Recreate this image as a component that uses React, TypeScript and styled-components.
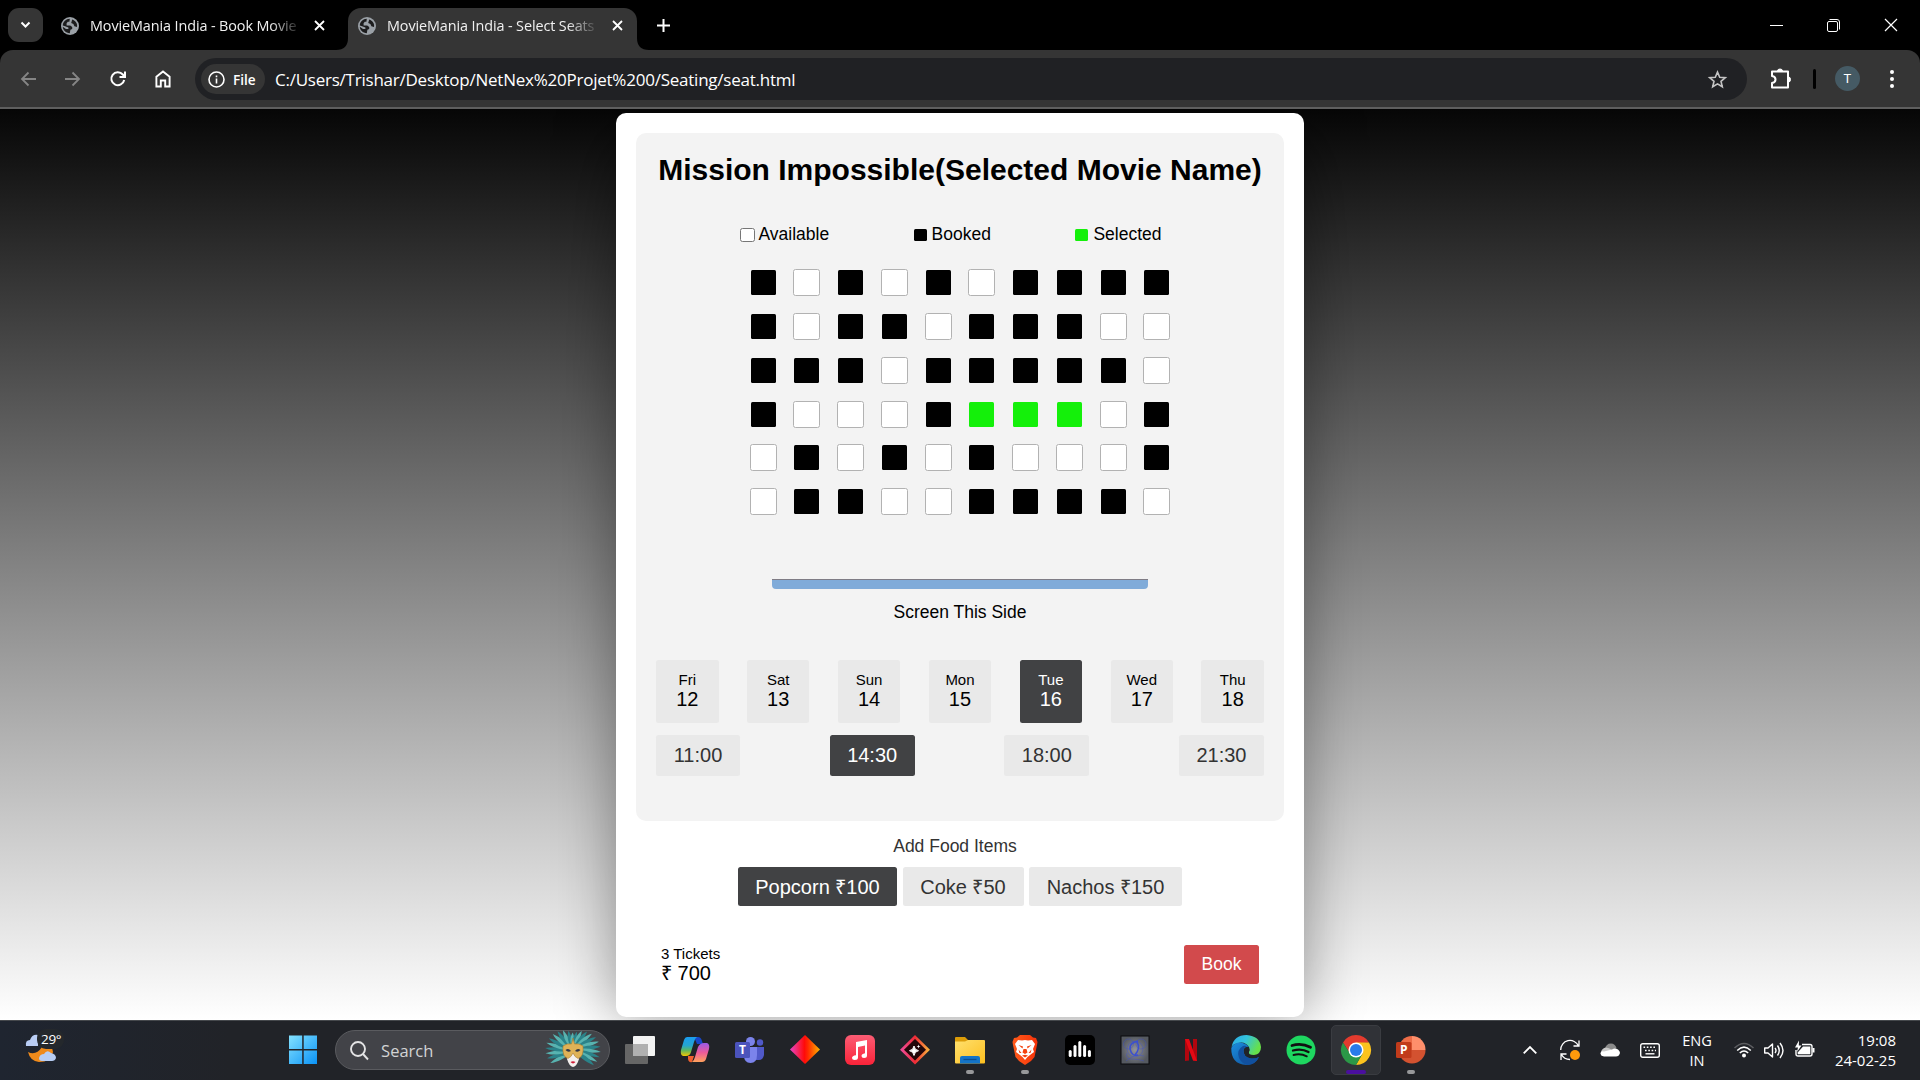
import React from "react";
import styled, { createGlobalStyle, css } from "styled-components";

const GlobalStyle = createGlobalStyle`
  * { box-sizing: border-box; }
  body { margin: 0; background: #000; overflow: hidden; }
  button { font: inherit; border: 0; padding: 0; margin: 0; }
  svg { display: block; flex: none; overflow: visible; }
`;

const uiFont = `"Open Sans", "Noto Sans", sans-serif`;
const pageFont = `"Liberation Sans", Arial, sans-serif`;

const Desktop = styled.div`
  width: 1920px;
  height: 1080px;
  display: flex;
  flex-direction: column;
  overflow: hidden;
`;

/* ---------- Browser chrome ---------- */

const TabStrip = styled.div`
  height: 50px;
  flex: none;
  display: flex;
  align-items: flex-end;
  background: #000;
  font-family: ${uiFont};
  color: #fff;
`;

const TabSearch = styled.div`
  width: 35px;
  height: 34px;
  margin: 0 0 8px 8px;
  border-radius: 11px;
  background: #353535;
  display: grid;
  place-items: center;
`;

const Tab = styled.div<{ $active?: boolean }>`
  width: ${(p) => (p.$active ? 289 : 293)}px;
  height: 42px;
  display: flex;
  align-items: center;
  padding: 0 12px 7px ${(p) => (p.$active ? 10 : 18)}px;
  border-radius: 13px 13px 0 0;
  background: ${(p) => (p.$active ? "#353535" : "transparent")};
`;

const TabTitle = styled.span<{ $gap: number }>`
  width: 211px;
  margin-left: 11px;
  margin-right: ${(p) => p.$gap}px;
  overflow: hidden;
  white-space: nowrap;
  font-size: 14.4px;
  letter-spacing: -0.1px;
  line-height: 20px;
  color: #f1f1f1;
  mask-image: linear-gradient(90deg, #000 180px, transparent 212px);
`;

const Flare = styled.svg`
  width: 12px;
  height: 12px;
`;

const NewTab = styled.div`
  width: 28px;
  height: 50px;
  display: grid;
  place-items: center;
`;

const WindowButtons = styled.div`
  margin-left: auto;
  padding-right: 1px;
  height: 50px;
  display: flex;
  align-items: center;
`;

const WindowButton = styled.div`
  width: 57px;
  height: 49px;
  display: grid;
  place-items: center;
`;

const Toolbar = styled.div`
  height: 57px;
  flex: none;
  display: flex;
  align-items: center;
  background: #353535;
  border-radius: 13px 13px 0 0;
  font-family: ${uiFont};
  padding-left: 6px;
`;

const ToolButton = styled.div<{ $w?: number }>`
  width: ${(p) => p.$w ?? 45}px;
  height: 57px;
  display: grid;
  place-items: center;
`;

const Omnibox = styled.div`
  width: 1552px;
  height: 42px;
  margin-top: 1px;
  margin-left: 10px;
  border-radius: 21px;
  background: #202124;
  display: flex;
  align-items: center;
  padding: 0 20px 0 6px;
`;

const FileChip = styled.div`
  width: 64px;
  height: 30px;
  border-radius: 15px;
  background: #353535;
  color: #fff;
  display: flex;
  align-items: center;
  gap: 8px;
  padding-left: 7px;
  font-size: 13.6px;
  font-weight: 600;
`;

const Url = styled.span`
  margin-left: 10px;
  flex: 1;
  font-size: 17px;
  letter-spacing: -0.235px;
  line-height: 24px;
  padding-top: 1px;
  color: #fff;
  white-space: nowrap;
`;

const Divider = styled.div`
  width: 3px;
  height: 20px;
  border-radius: 2px;
  background: #000;
`;

const Avatar = styled.div`
  width: 25px;
  height: 25px;
  border-radius: 50%;
  margin: 0 17px 0 19px;
  background: #455a64;
  color: #fff;
  font: 13px Roboto, sans-serif;
  display: grid;
  place-items: center;
`;

const ChromeEdge = styled.div`
  height: 2px;
  flex: none;
  background: #5f5f5f;
`;

/* ---------- Booking page ---------- */

const Page = styled.main`
  height: 911px;
  flex: none;
  overflow: hidden;
  display: flex;
  justify-content: center;
  align-items: flex-start;
  background: linear-gradient(#060606, #fff);
  font-family: ${pageFont};
  color: #000;
`;

const Card = styled.section`
  width: 688px;
  height: 904px;
  margin-top: 4px;
  padding: 20px;
  border-radius: 10px;
  background: #fff;
  box-shadow: 0 0 60px rgba(0, 0, 0, 0.4);
  display: flex;
  flex-direction: column;
`;

const Panel = styled.div`
  height: 688px;
  flex: none;
  padding: 20px;
  border-radius: 10px;
  background: #f3f3f3;
  display: flex;
  flex-direction: column;
  align-items: center;
`;

const Title = styled.h1`
  margin: 0;
  font-size: 30px;
  line-height: 33px;
  white-space: nowrap;
`;

const Legend = styled.div`
  width: 422px;
  height: 20px;
  margin: 38px 19px 25.4px 0;
  display: flex;
  justify-content: space-between;
`;

const LegendItem = styled.div<{ $gap: number }>`
  display: flex;
  align-items: center;
  gap: ${(p) => p.$gap}px;
  font-size: 17.5px;
  line-height: 20px;
`;

type SeatState = "free" | "booked" | "picked";

const seatFill = {
  free: css`
    background: #fff;
    border: 1px solid #b2b2b2;
  `,
  booked: css`
    background: #000;
    border: 1px solid transparent;
    background-clip: padding-box;
  `,
  picked: css`
    background: #14f00a;
    border: 1px solid transparent;
    background-clip: padding-box;
  `,
};

const LegendBox = styled.span<{ $state: SeatState }>`
  width: 15px;
  height: 14px;
  margin-top: 2px;
  border-radius: 2.5px;
  ${(p) => seatFill[p.$state]}
  ${(p) => p.$state === "free" && "border-color: #767676;"}
`;

const Seats = styled.div`
  display: grid;
  grid-template-columns: repeat(10, 27px);
  grid-auto-rows: 27px;
  gap: 16.75px;
`;

const Seat = styled.span<{ $state: SeatState }>`
  border-radius: 2.5px;
  ${(p) => seatFill[p.$state]}
`;

const Screen = styled.div`
  width: 376px;
  height: 10px;
  margin-top: 63.85px;
  background: #80abd9;
  border-top: 1px solid #7f7c85;
  border-radius: 0 0 4px 4px;
`;

const ScreenLabel = styled.div`
  margin-top: 13px;
  font-size: 17.5px;
  line-height: 20px;
`;

const Row = styled.div<{ $top: number }>`
  width: 608px;
  margin-top: ${(p) => p.$top}px;
  display: flex;
  justify-content: space-between;
`;

const choice = css<{ $on?: boolean }>`
  border-radius: 2.5px;
  background: ${(p) => (p.$on ? "#414244" : "#e9e9e9")};
`;

const Day = styled.button<{ $on?: boolean }>`
  ${choice}
  width: 62.5px;
  height: 63px;
  display: flex;
  flex-direction: column;
  align-items: center;
  padding-top: 11px;
  color: ${(p) => (p.$on ? "#fff" : "#000")};
`;

const DayName = styled.span`
  font-size: 15px;
  line-height: 18px;
`;

const DayNumber = styled.span`
  font-size: 20px;
  line-height: 20px;
`;

const Pill = styled.button<{ $on?: boolean; $w: number; $h: number }>`
  ${choice}
  width: ${(p) => p.$w}px;
  height: ${(p) => p.$h}px;
  font-size: 20px;
  white-space: nowrap;
  color: ${(p) => (p.$on ? "#fff" : "#333")};
`;

const FoodTitle = styled.div`
  margin-top: 15px;
  padding-right: 10px;
  text-align: center;
  font-size: 17.5px;
  line-height: 20px;
  color: #333;
`;

const FoodRow = styled.div`
  margin-top: 11px;
  display: flex;
  justify-content: center;
  gap: 5.5px;
`;

const Checkout = styled.div`
  margin-top: 39px;
  padding: 0 25px;
  display: flex;
  justify-content: space-between;
`;

const Tickets = styled.div`
  font-size: 15px;
  line-height: 18px;
`;

const Price = styled.div`
  font-size: 20px;
  line-height: 20px;
`;

const Book = styled.button`
  width: 75px;
  height: 39px;
  border-radius: 2.5px;
  background: #d24a4c;
  color: #fff;
  font-size: 17.5px;
`;

/* ---------- Taskbar ---------- */

const Taskbar = styled.footer`
  height: 60px;
  flex: none;
  display: flex;
  align-items: center;
  padding-bottom: 1px;
  background: linear-gradient(90deg, #1f2530, #212328 12%, #212328);
  border-top: 1px solid #45484c;
  font-family: ${uiFont};
  color: #fff;
`;

const Weather = styled.div`
  width: 275px;
  height: 58px;
  padding: 13px 0 0 25px;
  display: flex;
`;

const Temperature = styled.span`
  align-self: flex-start;
  margin: -4px 0 0 -15px;
  font-size: 13.5px;
  line-height: 18px;
  letter-spacing: -0.3px;
`;

const Slot = styled.div<{ $active?: boolean }>`
  width: ${(p) => (p.$active ? 50 : 55.1)}px;
  margin: ${(p) => (p.$active ? "0 2.55px" : "0")};
  height: 50px;
  display: flex;
  flex-direction: column;
  align-items: center;
  padding-top: 10px;
  border-radius: 5px;
  background: ${(p) => (p.$active ? "#303237" : "transparent")};
  border: ${(p) => (p.$active ? "1px solid #3a3c41" : "0")};
  ${(p) => p.$active && "padding-top: 9px;"}
`;

const Indicator = styled.span<{ $active?: boolean }>`
  width: ${(p) => (p.$active ? 20 : 8)}px;
  height: 4px;
  margin-top: 5px;
  border-radius: 2px;
  background: ${(p) => (p.$active ? "#4a0f9f" : "#97989a")};
`;

const SearchBox = styled.div`
  width: 275px;
  height: 40px;
  margin: 0 2px 0 5px;
  border-radius: 20px;
  border: 1px solid #5a5b5f;
  background: #424348;
  display: flex;
  align-items: center;
  padding: 0 7px 0 14px;
  font-size: 16.5px;
  color: #d2d3d4;
`;

const SearchText = styled.span`
  margin-left: 12px;
  flex: 1;
`;

const Tray = styled.div`
  margin-left: auto;
  display: flex;
  align-items: center;
  height: 58px;
  padding-right: 24px;
  font-size: 14.6px;
  line-height: 20px;
`;

const TrayIcon = styled.div<{ $w: number }>`
  width: ${(p) => p.$w}px;
  display: grid;
  place-items: center;
`;

const Language = styled.div`
  width: 54px;
  padding-left: 2px;
  text-align: center;
`;

const Clock = styled.div`
  width: 71px;
  text-align: right;
  white-space: nowrap;
  font-size: 15px;
`;

/* ---------- Icons ---------- */

const Globe = () => (
  <svg width="18" height="18" viewBox="0 0 18 18">
    <circle cx="9" cy="9" r="9" fill="#9aa0a6" />
    <path d="M1.800 8.600C2 4.600 5 1.900 8.800 1.800L8.400 4.800H6.800L5.600 6.200V8.600H9.200L11.200 10V12L9.400 12.800 8.800 16.200C4.800 16 1.800 13 1.800 9.800L5 12H7.400V10.600L4.800 9.600ZM11.200 2.400 10.200 6 12.400 7 13.400 9.200 16 10C16.800 6.600 14.600 3.600 11.200 2.400Z" fill="#1c1c1d" />
  </svg>
);

const Cross = ({ size = 9, w = 1.8 }: { size?: number; w?: number }) => (
  <svg width={size} height={size} viewBox={`0 0 ${size} ${size}`} stroke="#fff" strokeWidth={w}>
    <path d={`M0 0L${size} ${size}M${size} 0L0 ${size}`} />
  </svg>
);

const Arrow = ({ flip }: { flip?: boolean }) => (
  <svg width="15" height="14" viewBox="0 0 15 14" fill="none" stroke="#858585" strokeWidth="1.8">
    <path d={flip ? "M0 7H14M7.5 .5 14 7 7.5 13.5" : "M15 7H1M7.5 .5 1 7 7.5 13.5"} />
  </svg>
);

const bars = (xs: number[][]) =>
  xs.map(([x, y, h]) => <rect key={x} x={x} y={y} width="3" height={h} rx="1.5" fill="#fff" />);

const feather = (a: number, len: number, c: string) => (
  <path key={a} transform={`translate(29 19) rotate(${a}) scale(1 ${len})`} d="M0 0C-3-9-2.500-18 1-24 3-16 2-7 0 0Z" fill={c} />
);

const Mask = () => (
  <svg width="58" height="38" viewBox="0 0 58 38">
    {[-122, -110, -99, -88, -77, -66, -54, -42, -29, -16, -4, 9, 22, 35, 47, 59, 70, 81, 92, 103, 114, 124].map((a, i) =>
      feather(a, 0.7 + 0.46 * Math.abs(Math.sin((a * Math.PI) / 180)), i % 2 ? "#2a8289" : "#58b3b0"),
    )}
    <path d="M22 19H36L35 28Q33 35 29 36 25 35 23 28Z" fill="#f4f0ee" />
    <path d="M19 15Q23 12 27.500 13L29 7 30.500 13Q35 12 39 15 40 26 34 27.500 30.500 26 29 22 27.500 26 24 27.500 18 26 19 15Z" fill="#dfb257" stroke="#a87a2e" strokeWidth=".6" />
    <path d="M21.500 19Q24.500 16.500 27 20 24 22 21.500 19ZM31 20Q33.500 16.500 36.500 19 34 22 31 20Z" fill="#333747" />
    <path d="M26.500 31Q29 29.500 31.500 31 29 33.800 26.500 31Z" fill="#d01c38" />
  </svg>
);

const CloudMoon = () => (
  <svg width="31" height="36" viewBox="0 0 31 36">
    <path d="M1 12Q0 6 5 6 7 0 13 1V12Z" fill="#b9cdf5" />
    <path d="M3 18Q11 22 17 13 27 9 28 18 26 28 14 28 5 27 3 18Z" fill="#ef8a1b" />
    <path d="M14 24Q15 20 19 20 22 15 26 19 31 20 31 24 30 27 27 27H17Q14 27 14 24Z" fill="#b7cdf4" />
    <rect x="12" y="-5" width="27" height="20" rx="9" fill="#24282c" />
  </svg>
);

const WindowsLogo = () => (
  <svg width="30" height="30" viewBox="0 0 30 30">
    <linearGradient id="win" x1="0" y1="0" x2="1" y2="1" gradientUnits="objectBoundingBox">
      <stop stopColor="#84e2ff" />
      <stop offset="1" stopColor="#0a92f5" />
    </linearGradient>
    <path d="M1 .500H14.200V14H1ZM15.700.500H29V14H15.700ZM1 15.500H14.200V29H1ZM15.700 15.500H29V29H15.700Z" fill="url(#win)" />
  </svg>
);

const TaskView = () => (
  <svg width="30" height="30" viewBox="0 0 30 30">
    <rect x="8" y="1" width="22" height="20" rx="1" fill="#f3f3f3" />
    <rect x="0" y="9" width="23" height="20" rx="1" fill="#666" />
    <rect x="8" y="9" width="15" height="12" fill="#b0b0b0" />
  </svg>
);

const Copilot = () => (
  <svg width="30" height="30" viewBox="0 0 30 30">
    <linearGradient id="cpa" x1="0" y1="0" x2="0" y2="1">
      <stop stopColor="#1a9cf0" />
      <stop offset=".45" stopColor="#25a5cf" />
      <stop offset=".7" stopColor="#5cb860" />
      <stop offset="1" stopColor="#f3c800" />
    </linearGradient>
    <linearGradient id="cpb" x1="0" y1="0" x2="0" y2="1">
      <stop stopColor="#9a5be8" />
      <stop offset=".5" stopColor="#ec5a9a" />
      <stop offset="1" stopColor="#ffa25c" />
    </linearGradient>
    <path d="M14 2H18Q21 2 22 6L23 9H17Z" fill="#1747c8" />
    <path d="M8 21H14L12 27Q9 28 8 24Z" fill="#f0602f" />
    <path d="M7 2H17Q15 3 14 7L11 17Q10 21 6 21H3Q0 20 1 15L4 5Q5 2 7 2Z" fill="url(#cpa)" />
    <path d="M24 8H27Q30 9 29 14L26 24Q25 27 22 27H12Q14 26 15 22L18 12Q20 8 24 8Z" fill="url(#cpb)" />
  </svg>
);

const LetterInIcon = styled.text`
  font: 700 12px ${uiFont};
  fill: #fff;
`;

const Teams = () => (
  <svg width="30" height="30" viewBox="0 0 30 30">
    <circle cx="15.500" cy="6.500" r="4.500" fill="#7b83eb" />
    <circle cx="25" cy="7.500" r="3.200" fill="#5059c9" />
    <path d="M20 12H29V20Q28 25 24 25H20Z" fill="#5059c9" />
    <path d="M9 12H22V20Q22 28 15.500 28 9 28 9 20Z" fill="#7b83eb" />
    <rect x="0" y="7" width="15" height="16" rx="1.500" fill="#4b53bc" />
    <LetterInIcon x="7.500" y="19.300" textAnchor="middle">T</LetterInIcon>
  </svg>
);

const RedDiamond = () => (
  <svg width="30" height="30" viewBox="0 0 30 30">
    <linearGradient id="dia">
      <stop stopColor="#e646c8" />
      <stop offset=".48" stopColor="#ff0a0a" />
      <stop offset=".6" stopColor="#ff2a00" />
      <stop offset="1" stopColor="#ffb400" />
    </linearGradient>
    <path d="M15 0 30 14.500 15 29 0 14.500Z" fill="url(#dia)" />
  </svg>
);

const AppleMusic = () => (
  <svg width="30" height="30" viewBox="0 0 30 30">
    <linearGradient id="mus" x1="0" y1="0" x2="0" y2="1">
      <stop stopColor="#fb5c74" />
      <stop offset="1" stopColor="#fa2339" />
    </linearGradient>
    <rect width="30" height="30" rx="6" fill="url(#mus)" />
    <path d="M11 7 22 5V20.500Q22 23 19 23 16.500 23 16.500 21 16.500 19 20 18.300V10.500L13 12V22.500Q13 25 9.700 25 7 25 7 23 7 20.800 11 20.300Z" fill="#fff" />
  </svg>
);

const SparkDiamond = () => (
  <svg width="30" height="30" viewBox="0 0 30 30">
    <linearGradient id="spk">
      <stop stopColor="#ee4a94" />
      <stop offset=".5" stopColor="#ee2a35" />
      <stop offset="1" stopColor="#f9a93c" />
    </linearGradient>
    <path d="M15 2 28 14.700 15 27.500 2 14.700Z" fill="#220609" stroke="url(#spk)" strokeWidth="2.800" />
    <path d="M14 11Q14.500 15 18.500 15.700 14.500 16.400 14 20.500 13.500 16.400 9.500 15.700 13.500 15 14 11Z" fill="#fff" stroke="#fff" />
    <path d="M18.500 9.500 19 11 20.500 11.500 19 12 18.500 13.500 18 12 16.500 11.500 18 11Z" fill="#fff" />
  </svg>
);

const Folder = () => (
  <svg width="30" height="30" viewBox="0 0 30 30">
    <linearGradient id="fol" x1="0" y1="0" x2="1" y2="1">
      <stop stopColor="#ffe06e" />
      <stop offset="1" stopColor="#fdbf1f" />
    </linearGradient>
    <path d="M0 3Q0 2 1 2H10L13 5V8H0Z" fill="#dc9c08" />
    <path d="M0 6.500H10L13 5H29Q30 5 30 6V27.500Q30 28.500 29 28.500H1Q0 28.500 0 27.500Z" fill="url(#fol)" />
    <path d="M5 28.500V23Q5 21 7 21H23Q25 21 25 23V28.500Z" fill="#1474c8" />
    <path d="M8.500 24.500H21.500" stroke="#0a4f93" strokeWidth="1.300" />
  </svg>
);

const Brave = () => (
  <svg width="30" height="30" viewBox="0 0 30 30">
    <linearGradient id="brv">
      <stop stopColor="#ff5a1a" />
      <stop offset="1" stopColor="#f5330a" />
    </linearGradient>
    <path d="M10 0H20L23 2.500 26 3 27.500 7 27 10 24.500 22 21 26 15 30 9 26 5.500 22 3 10 2.500 7 4 3 7 2.500Z" fill="url(#brv)" />
    <path d="M8 5 12 5.500 15 5 18 5.500 22 5 25 9 23 14 24 17 20 20 17.500 22 15 25 12.500 22 10 20 6 17 7 14 5 9Z" fill="#fff" />
    <path d="M8.500 10 13 11.500 12.500 13.500ZM21.500 10 17 11.500 17.500 13.500ZM13.500 14H16.500L17.500 17.500 15 19 12.500 17.500ZM8.500 14.500 11.500 18 9.500 18ZM21.500 14.500 18.500 18H20.500ZM12 20.500 15 19.700 18 20.500 15 22.500Z" fill="#f4430f" />
  </svg>
);

const Equalizer = () => (
  <svg width="30" height="30" viewBox="0 0 30 30">
    <rect width="30" height="30" rx="5" fill="#000" />
    {bars([[3.700, 15, 7], [8.500, 10, 12], [13.300, 6, 16], [18.100, 10, 12], [22.900, 15, 7]])}
  </svg>
);

const Emblem = () => (
  <svg width="30" height="30" viewBox="0 0 30 30" fill="none">
    <radialGradient id="emb">
      <stop stopColor="#92939a" />
      <stop offset="1" stopColor="#555960" />
    </radialGradient>
    <rect x="1" y="1" width="28" height="28" fill="url(#emb)" stroke="#0b0b0c" />
    <g stroke="#3b4fd0" strokeWidth=".7">
      <circle cx="15" cy="14" r="8" strokeOpacity=".5" />
      <circle cx="8.500" cy="9" r="5" strokeOpacity=".6" />
      <circle cx="21" cy="9" r="5" strokeOpacity=".6" />
      <path d="M7 18Q5 24 12 24T24 26M6 26Q15 18 24 21" strokeOpacity=".6" />
      <path d="M18 6Q9 8 10 14 12 22 18 20M17 7Q21 13 15 20" strokeWidth="1.500" />
    </g>
  </svg>
);

const Netflix = () => (
  <svg width="30" height="30" viewBox="0 0 30 30">
    <path d="M9 4H13V25.500L9 26ZM17 4H21V26L17 25.500Z" fill="#b1060f" />
    <path d="M9 4H13L21 26 17 25.500Z" fill="#e50914" />
  </svg>
);

const Edge = () => (
  <svg width="30" height="30" viewBox="0 0 30 30">
    <linearGradient id="edg1" x1="0" y1="0" x2="1" y2=".4">
      <stop stopColor="#2aa9e8" />
      <stop offset=".5" stopColor="#33c3dc" />
      <stop offset="1" stopColor="#66e04a" />
    </linearGradient>
    <linearGradient id="edg2" x1="0" y1="0" x2="1" y2="1">
      <stop stopColor="#1b8fe0" />
      <stop offset="1" stopColor="#0f4a94" />
    </linearGradient>
    <path d="M.500 12Q3 0 15.500 0 29 1 30 12 30 19 23 20 17 20 18 17 19.500 15 18 12 14 6 7 8 2 9 .500 12Z" fill="url(#edg1)" />
    <path d="M.300 13Q3 7.500 9 7.500 15 8 18 12 14 11 12.500 15 12 22 20 23.500 25 24 28 22 24 30 15 30 0 29 .300 13Z" fill="url(#edg2)" />
    <path d="M12 11Q5 15 8 23 11 29 17 30 25 29 28 22 24 24 20 23.500 12 22 12.500 15 13 12 16 11.300Q14 10.500 12 11Z" fill="#11509f" />
  </svg>
);

const Spotify = () => (
  <svg width="30" height="30" viewBox="0 0 30 30" fill="none" strokeLinecap="round">
    <circle cx="15" cy="15" r="14.500" fill="#1ed760" />
    <path d="M6 10.500Q15.500 7.500 24.500 12.300" stroke="#111" strokeWidth="2.800" />
    <path d="M7 15.500Q15.500 13 22.500 17" stroke="#111" strokeWidth="2.300" />
    <path d="M7.500 20Q14.500 18 20.800 21.300" stroke="#111" strokeWidth="1.900" />
  </svg>
);

const Chrome = () => (
  <svg width="30" height="30" viewBox="0 0 30 30">
    <path d="M2 7.500A15 15 0 0 1 28 7.500L15 8.500 9 18.500Z" fill="#e33b2e" />
    <path d="M28 7.500A15 15 0 0 1 15 30L21.500 18.500 15 7.500Z" fill="#fcc31e" />
    <path d="M2 7.500A15 15 0 0 0 15 30L21.500 18.700 9 18.500Z" fill="#2b9847" />
    <circle cx="15" cy="15" r="7.500" fill="#fff" />
    <circle cx="15" cy="15" r="6" fill="#2a7be9" />
  </svg>
);

const PowerPoint = () => (
  <svg width="30" height="30" viewBox="0 0 30 30">
    <path d="M16 1A13.500 13.500 0 0 0 2.500 15H16Z" fill="#ed6c47" />
    <path d="M16 1A13.500 13.500 0 0 1 29.500 15H16Z" fill="#ff8f6b" />
    <path d="M2.500 15A13.500 13.500 0 0 0 29.500 15Z" fill="#d35230" />
    <rect x="0" y="7" width="15.500" height="16" rx="1.500" fill="#c13b1b" />
    <LetterInIcon x="7.700" y="19.300" textAnchor="middle">P</LetterInIcon>
  </svg>
);

/* ---------- Data ---------- */

const seatPlan = [
  "b.b.b.bbbb",
  "b.bb.bbb..",
  "bbb.bbbbb.",
  "b...bsss.b",
  ".b.b.b...b",
  ".bb..bbbb.",
];
const seatStates: Record<string, SeatState> = { b: "booked", ".": "free", s: "picked" };

const days: [string, number][] = [
  ["Fri", 12], ["Sat", 13], ["Sun", 14], ["Mon", 15], ["Tue", 16], ["Wed", 17], ["Thu", 18],
];
const times = [
  { label: "11:00", width: 84 },
  { label: "14:30", width: 85 },
  { label: "18:00", width: 85 },
  { label: "21:30", width: 85 },
];
const foods = [
  { label: "Popcorn ₹100", width: 159 },
  { label: "Coke ₹50", width: 121 },
  { label: "Nachos ₹150", width: 153 },
];

const apps: { icon: React.FC; open?: boolean; active?: boolean }[] = [
  { icon: TaskView }, { icon: Copilot }, { icon: Teams }, { icon: RedDiamond }, { icon: AppleMusic },
  { icon: SparkDiamond }, { icon: Folder, open: true }, { icon: Brave, open: true }, { icon: Equalizer },
  { icon: Emblem }, { icon: Netflix }, { icon: Edge }, { icon: Spotify },
  { icon: Chrome, open: true, active: true }, { icon: PowerPoint, open: true },
];

const BrowserChrome = () => (
  <>
    <TabStrip>
      <TabSearch>
        <svg width="9" height="6" viewBox="0 0 9 6" fill="none" stroke="#fff" strokeWidth="2">
          <path d="M.500.500 4.500 4.500 8.500.500" />
        </svg>
      </TabSearch>
      <Tab>
        <Globe />
        <TabTitle $gap={16}>MovieMania India - Book Movie</TabTitle>
        <Cross />
      </Tab>
      <Flare viewBox="0 0 12 12"><path d="M12 0V12H0Q12 12 12 0Z" fill="#353535" /></Flare>
      <Tab $active>
        <Globe />
        <TabTitle $gap={15}>MovieMania India - Select Seats</TabTitle>
        <Cross />
      </Tab>
      <Flare viewBox="0 0 12 12"><path d="M0 0V12H12Q0 12 0 0Z" fill="#353535" /></Flare>
      <NewTab>
        <svg width="13" height="13" viewBox="0 0 13 13" stroke="#fff" strokeWidth="2"><path d="M6.500 0V13M0 6.500H13" /></svg>
      </NewTab>
      <WindowButtons>
        <WindowButton>
          <svg width="13" height="1" viewBox="0 0 13 1"><rect width="13" height="1" fill="#fff" /></svg>
        </WindowButton>
        <WindowButton>
          <svg width="13" height="13" viewBox="0 0 13 13" fill="none" stroke="#fff">
            <rect x=".500" y="2.500" width="10" height="10" rx="1.500" />
            <path d="M2.500.500H10Q12.500.500 12.500 3V10.500" />
          </svg>
        </WindowButton>
        <WindowButton><Cross size={12} w={1.2} /></WindowButton>
      </WindowButtons>
    </TabStrip>
    <Toolbar>
      <ToolButton $w={44}><Arrow /></ToolButton>
      <ToolButton><Arrow flip /></ToolButton>
      <ToolButton>
        <svg width="16" height="16" viewBox="0 0 16 16" fill="none" stroke="#fff" strokeWidth="2">
          <path d="M14.200 9A6.500 6.500 0 1 1 12.800 3.500L14.500 5.500M15 .500V6H9.500" />
        </svg>
      </ToolButton>
      <ToolButton>
        <svg width="16" height="18" viewBox="0 0 16 18" fill="none" stroke="#fff" strokeWidth="1.900">
          <path d="M1.400 16.500V6.700L8 1.500 14.600 6.700V16.500H10.200V10.500H5.800V16.500Z" />
        </svg>
      </ToolButton>
      <Omnibox>
        <FileChip>
          <svg width="17" height="17" viewBox="0 0 17 17" fill="none" stroke="#fff" strokeWidth="1.600">
            <circle cx="8.500" cy="8.500" r="7.500" />
            <path d="M8.500 7.500V12.500M8.500 4.500V6.200" />
          </svg>
          File
        </FileChip>
        <Url>C:/Users/Trishar/Desktop/NetNex%20Projet%200/Seating/seat.html</Url>
        <svg width="19" height="19" viewBox="0 0 19 19" fill="none" stroke="#c4c4c4" strokeWidth="1.600">
          <path d="M9.500 2 11.700 7.200 17.300 7.700 13 11.300 14.300 16.800 9.500 13.900 4.700 16.800 6 11.300 1.700 7.700 7.300 7.200Z" />
        </svg>
      </Omnibox>
      <ToolButton $w={66}>
        <svg width="20" height="20" viewBox="0 0 20 20" fill="none" stroke="#fff" strokeWidth="2" strokeLinejoin="round">
          <path d="M2 2.500H18V18.500H2V14Q5.500 13.500 5.500 10.500T2 7Z" />
          <path d="M7.500 2A2.500 2 0 0 1 12.500 2ZM18.500 8A2 2.500 0 0 1 18.500 13Z" fill="#fff" strokeWidth="1" />
        </svg>
      </ToolButton>
      <Divider />
      <Avatar>T</Avatar>
      <ToolButton $w={30}>
        <svg width="4" height="18" viewBox="0 0 4 18" fill="#fff">
          <circle cx="2" cy="2" r="2" /><circle cx="2" cy="9" r="2" /><circle cx="2" cy="16" r="2" />
        </svg>
      </ToolButton>
    </Toolbar>
    <ChromeEdge />
  </>
);

const BookingPage = () => (
  <Page>
    <Card>
      <Panel>
        <Title>Mission Impossible(Selected Movie Name)</Title>
        <Legend>
          <LegendItem $gap={4}><LegendBox $state="free" />Available</LegendItem>
          <LegendItem $gap={4}><LegendBox $state="booked" />Booked</LegendItem>
          <LegendItem $gap={4}><LegendBox $state="picked" />Selected</LegendItem>
        </Legend>
        <Seats>
          {seatPlan.flatMap((row, r) =>
            [...row].map((s, c) => <Seat key={`${r}-${c}`} $state={seatStates[s]} />),
          )}
        </Seats>
        <Screen />
        <ScreenLabel>Screen This Side</ScreenLabel>
        <Row $top={38}>
          {days.map(([name, n]) => (
            <Day key={n} $on={n === 16}>
              <DayName>{name}</DayName>
              <DayNumber>{n}</DayNumber>
            </Day>
          ))}
        </Row>
        <Row $top={12}>
          {times.map((t) => (
            <Pill key={t.label} $w={t.width} $h={41} $on={t.label === "14:30"}>{t.label}</Pill>
          ))}
        </Row>
      </Panel>
      <FoodTitle>Add Food Items</FoodTitle>
      <FoodRow>
        {foods.map((f, i) => <Pill key={f.label} $w={f.width} $h={39} $on={i === 0}>{f.label}</Pill>)}
      </FoodRow>
      <Checkout>
        <div>
          <Tickets>3 Tickets</Tickets>
          <Price>₹ 700</Price>
        </div>
        <Book>Book</Book>
      </Checkout>
    </Card>
  </Page>
);

const SystemTray = () => (
  <Tray>
    <TrayIcon $w={39}>
      <svg width="14" height="8" viewBox="0 0 14 8" fill="none" stroke="#fff" strokeWidth="1.800"><path d="M.700 7.300 7 1 13.300 7.300" /></svg>
    </TrayIcon>
    <TrayIcon $w={41}>
      <svg width="20" height="20" viewBox="0 0 20 20" fill="none" stroke="#fff" strokeWidth="1.300">
        <path d="M.700 10A9.300 9.300 0 0 1 18.500 6M19 .500V6H13.500M1 20V14H6.500M1.500 14.500Q4 19.500 10 19.500" />
        <circle cx="15" cy="15" r="5" fill="#ff9a0c" stroke="none" />
      </svg>
    </TrayIcon>
    <TrayIcon $w={40}>
      <svg width="20" height="14" viewBox="0 0 20 14">
        <path d="M5 6Q6 .500 11 .500 15 .500 16.500 5L12 8Z" fill="#8a8a8a" />
        <path d="M1 9Q2 5 6 4.500 9 4.500 12 7L7 13H4Q0 13 1 9Z" fill="#c9c9c9" />
        <path d="M.500 10Q1 7.800 4 8.500L12 6.500Q15 4.500 18 6.500 20 8 20 10 19 13.500 16 13.500H4Q.500 13 .500 10Z" fill="#fff" />
      </svg>
    </TrayIcon>
    <TrayIcon $w={39}>
      <svg width="20" height="15" viewBox="0 0 20 15" fill="none" stroke="#fff">
        <rect x=".700" y=".700" width="18.600" height="13.600" rx="2" strokeWidth="1.400" />
        <path d="M3.500 4.300H16.500M5 7.500H16" strokeWidth="1.600" strokeDasharray="1.600 1.700" />
        <path d="M5.500 10.800H14.500" strokeWidth="1.400" />
      </svg>
    </TrayIcon>
    <Language>ENG<br />IN</Language>
    <TrayIcon $w={41}>
      <svg width="20" height="15" viewBox="0 0 20 15" fill="none" stroke="#fff" strokeWidth="1.500">
        <path d="M.500 5Q10-4 19.500 5" stroke="#5c5d60" />
        <path d="M3.200 7.500Q10 .800 16.800 7.500M5.800 10Q10 6 14.200 10" />
        <circle cx="10" cy="12.500" r="2" fill="#fff" stroke="none" />
      </svg>
    </TrayIcon>
    <TrayIcon $w={20}>
      <svg width="20" height="17" viewBox="0 0 20 17" fill="none" stroke="#fff" strokeWidth="1.400">
        <path d="M.700 6H4L8.500 2V15L4 11H.700Z" strokeLinejoin="round" />
        <path d="M11 6Q13 8.500 11 11M13.500 3.500Q17 8.500 13.500 13.500M16 1Q22 8.500 16 16" />
      </svg>
    </TrayIcon>
    <TrayIcon $w={41}>
      <svg width="20" height="16" viewBox="0 0 20 16" fill="none" stroke="#fff" strokeWidth="1.400">
        <path d="M7 2.500H15Q17 2.500 17 4.500V12Q17 14 15 14H3Q1 14 1 12V8" />
        <path d="M8 4.500H15.300V12.300H2.700V10.500Z" fill="#fff" stroke="none" />
        <path d="M18.500 6V10.500" strokeWidth="2" />
        <path d="M4-1.500 0 5.500H3L2 10 6.500 3.500H3.800Z" fill="#fff" stroke="none" />
      </svg>
    </TrayIcon>
    <Clock>19:08<br />24-02-25</Clock>
  </Tray>
);

export default function App() {
  return (
    <Desktop>
      <GlobalStyle />
      <BrowserChrome />
      <BookingPage />
      <Taskbar>
        <Weather>
          <CloudMoon />
          <Temperature>29°</Temperature>
        </Weather>
        <Slot><WindowsLogo /></Slot>
        <SearchBox>
          <svg width="19" height="19" viewBox="0 0 19 19" fill="none" stroke="#e4e4e5" strokeWidth="1.900">
            <circle cx="8" cy="8" r="7" /><path d="M13 13 18 18.500" />
          </svg>
          <SearchText>Search</SearchText>
          <Mask />
        </SearchBox>
        {apps.map(({ icon: Icon, open, active }, i) => (
          <Slot key={i} $active={active}>
            <Icon />
            {open && <Indicator $active={active} />}
          </Slot>
        ))}
        <SystemTray />
      </Taskbar>
    </Desktop>
  );
}
